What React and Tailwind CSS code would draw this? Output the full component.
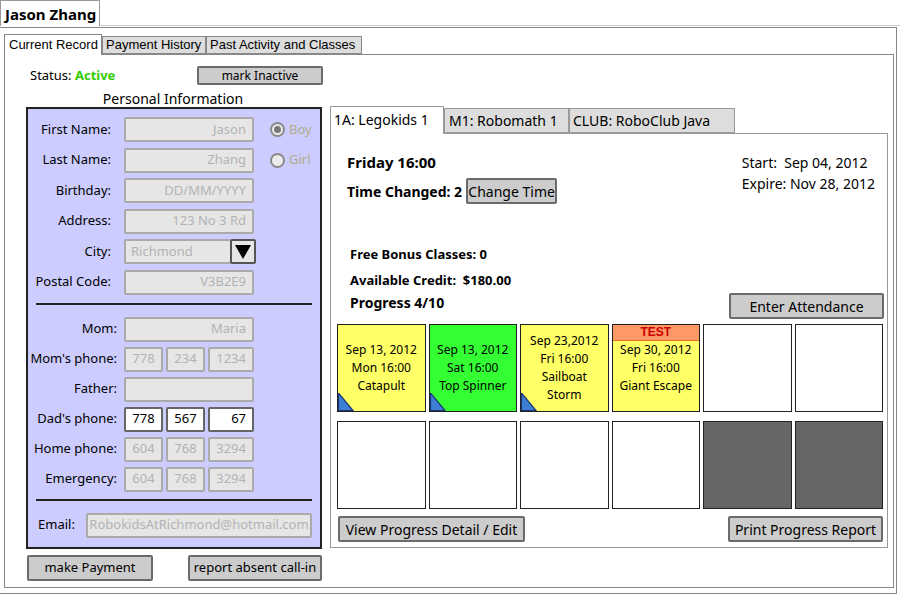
import React from 'react'

const Btn = ({ className = '', children }) => (
    <div className={`flex items-center justify-center bg-[#cccccc] border-2 border-[#6b6b6b] rounded-[2px] text-black whitespace-nowrap ${className}`}>
        {children}
    </div>
)

const Input = ({ className = '', value, white }) => (
    <div
        className={`h-[25px] flex items-center justify-end pr-[6px] text-[13px] rounded-[2px] border-2 ${white ? 'bg-white border-[#666] text-black' : 'bg-[#e6e6e6] border-[#aaa] text-[#b3b3b3]'} ${className}`}
    >
        {value}
    </div>
)

const Row = ({ label, lw, gap, children }) => (
    <div className="flex items-center h-[25px]">
        <div className={`${lw} ${gap} text-right text-[13px] whitespace-nowrap shrink-0`}>{label}</div>
        {children}
    </div>
)

const Radio = ({ checked, label }) => (
    <div className="flex items-center ml-[16px] gap-[4px]">
        <div className="w-[15px] h-[15px] rounded-full border-2 border-[#8a8a8a] bg-[#ececec] flex items-center justify-center">
            {checked && <div className="w-[7px] h-[7px] rounded-full bg-[#777]" />}
        </div>
        <span className="text-[13px] text-[#b0ad8a]">{label}</span>
    </div>
)

const Phone = ({ a, b, c, white }) => (
    <div className="flex gap-[3px]">
        <Input className="w-[39px] !justify-center !pr-0" value={a} white={white} />
        <Input className="w-[39px] !justify-center !pr-0" value={b} white={white} />
        <Input className="w-[46px]" value={c} white={white} />
    </div>
)

const Corner = () => (
    <svg className="absolute left-0 bottom-0" width="16" height="18" viewBox="0 0 16 18">
        <polygon points="0.5,0 0.5,17.5 15,17.5" fill="#3d7fd3" stroke="#1d3577" strokeWidth="1.2" />
    </svg>
)

const row1 = [
    { bg: 'bg-[#ffff66]', lines: ['Sep 13, 2012', 'Mon 16:00', 'Catapult'], corner: true },
    { bg: 'bg-[#33ff33]', lines: ['Sep 13, 2012', 'Sat 16:00', 'Top Spinner'], corner: true },
    { bg: 'bg-[#ffff66]', lines: ['Sep 23,2012', 'Fri 16:00', 'Sailboat', 'Storm'], corner: true },
    { bg: 'bg-[#ffff66]', lines: ['Sep 30, 2012', 'Fri 16:00', 'Giant Escape'], test: true },
    { bg: 'bg-white', lines: [] },
    { bg: 'bg-white', lines: [] },
]

const row2 = [
    { bg: 'bg-white', lines: [] },
    { bg: 'bg-white', lines: [] },
    { bg: 'bg-white', lines: [] },
    { bg: 'bg-white', lines: [] },
    { bg: 'bg-[#666666]', lines: [] },
    { bg: 'bg-[#666666]', lines: [] },
]

const Card = ({ card }) => (
    <div className={`relative h-[88px] border border-[#222] ${card.bg} flex flex-col items-center justify-center text-center text-[12px] leading-[18px]`}>
        {card.test && (
            <div className="absolute top-0 inset-x-0 h-[16px] bg-[#ff9966] border-b border-[#e0702a] text-[#cc0000] font-bold text-[12px] leading-[15px] font-['Liberation_Sans',sans-serif]">
                TEST
            </div>
        )}
        {card.lines.map((l) => (
            <div key={l}>{l}</div>
        ))}
        {card.corner && <Corner />}
    </div>
)

export default function App() {
    return (
        <div className="w-[900px] h-[596px] overflow-hidden bg-white text-black font-['Noto_Sans',sans-serif]">
            {/* top tab */}
            <div className="flex h-[26px]">
                <div className="w-[100px] h-[26px] border-t border-l border-r border-[#999] pl-[4px] text-[15px] font-bold leading-[26px]">
                    Jason Zhang
                </div>
                <div className="flex-1 border-b border-[#ccc]" />
            </div>

            {/* outer box */}
            <div className="mt-px w-[897px] h-[567px] border-t border-r border-b border-[#888] pl-[4px] pt-[6px]">
                <div className="flex items-end h-[20px] font-['Liberation_Sans',sans-serif] text-[13px]">
                    <div className="relative z-10 w-[98px] h-[21px] -mb-px bg-white border-t border-l border-r border-[#888] pl-[4px] leading-[19px]">
                        Current Record
                    </div>
                    <div className="w-[104px] h-[18px] bg-[#dddddd] border border-[#888] pl-[3px] leading-[16px]">
                        Payment History
                    </div>
                    <div className="w-[156px] h-[18px] bg-[#dddddd] border border-[#888] pl-[3px] leading-[16px]">
                        Past Activity and Classes
                    </div>
                </div>

                <div className="w-[890px] h-[534px] border border-[#888] flex pl-[21px]">
                    {/* left column */}
                    <div className="w-[296px] flex flex-col">
                        <div className="mt-[11px] h-[19px] flex items-center">
                            <div className="pl-[4px] text-[13px]">
                                Status: <span className="font-bold text-[#33cc00]">Active</span>
                            </div>
                            <Btn className="ml-auto -mr-px w-[126px] h-[19px] text-[12px]">mark Inactive</Btn>
                        </div>
                        <div className="h-[22px] pt-[5px] text-center text-[14px] leading-[17px] pr-[2px]">Personal Information</div>

                        <div className="h-[442px] bg-[#ccccff] border-2 border-[#222] pt-[8px]">
                            <div className="flex flex-col gap-[5.5px]">
                                <Row label="First Name:" lw="w-[83px]" gap="mr-[13px]">
                                    <Input className="w-[130px]" value="Jason" />
                                    <Radio checked label="Boy" />
                                </Row>
                                <Row label="Last Name:" lw="w-[83px]" gap="mr-[13px]">
                                    <Input className="w-[130px]" value="Zhang" />
                                    <Radio label="Girl" />
                                </Row>
                                <Row label="Birthday:" lw="w-[83px]" gap="mr-[13px]">
                                    <Input className="w-[130px]" value="DD/MM/YYYY" />
                                </Row>
                                <Row label="Address:" lw="w-[83px]" gap="mr-[13px]">
                                    <Input className="w-[130px]" value="123 No 3 Rd" />
                                </Row>
                                <Row label="City:" lw="w-[83px]" gap="mr-[13px]">
                                    <div className="w-[132px] h-[25px] flex">
                                        <div className="flex-1 bg-[#e6e6e6] border-2 border-r-0 border-[#aaa] rounded-l-[2px] text-[13px] text-[#b3b3b3] pl-[5px] leading-[21px]">
                                            Richmond
                                        </div>
                                        <div className="w-[26px] bg-[#e6e6e6] border-2 border-[#555] rounded-[2px] flex items-center justify-center">
                                            <svg width="16" height="14" viewBox="0 0 16 14">
                                                <polygon points="0,0 16,0 8,14" fill="#000" />
                                            </svg>
                                        </div>
                                    </div>
                                </Row>
                                <Row label="Postal Code:" lw="w-[83px]" gap="mr-[13px]">
                                    <Input className="w-[130px]" value="V3B2E9" />
                                </Row>
                            </div>

                            <div className="mx-[8px] mt-[8px] mb-[12px] h-[2px] bg-[#222]" />

                            <div className="flex flex-col gap-[5px]">
                                <Row label="Mom:" lw="w-[89px]" gap="mr-[7px]">
                                    <Input className="w-[130px]" value="Maria" />
                                </Row>
                                <Row label="Mom's phone:" lw="w-[89px]" gap="mr-[7px]">
                                    <Phone a="778" b="234" c="1234" />
                                </Row>
                                <Row label="Father:" lw="w-[89px]" gap="mr-[7px]">
                                    <Input className="w-[130px]" value="" />
                                </Row>
                                <Row label="Dad's phone:" lw="w-[89px]" gap="mr-[7px]">
                                    <Phone a="778" b="567" c="67" white />
                                </Row>
                                <Row label="Home phone:" lw="w-[89px]" gap="mr-[7px]">
                                    <Phone a="604" b="768" c="3294" />
                                </Row>
                                <Row label="Emergency:" lw="w-[89px]" gap="mr-[7px]">
                                    <Phone a="604" b="768" c="3294" />
                                </Row>
                            </div>

                            <div className="mx-[8px] mt-[7px] mb-[12px] h-[2px] bg-[#222]" />

                            <div className="flex items-center h-[25px] pl-[10px]">
                                <div className="w-[48px] text-[13px]">Email:</div>
                                <Input className="w-[226px] !justify-center !pr-0" value="RobokidsAtRichmond@hotmail.com" />
                            </div>
                        </div>

                        <div className="mt-[6px] flex justify-between">
                            <Btn className="ml-px w-[126px] h-[26px] text-[13px]">make Payment</Btn>
                            <Btn className="w-[134px] h-[26px] text-[13px]">report absent call-in</Btn>
                        </div>
                    </div>

                    {/* right column */}
                    <div className="ml-[8px] w-[558px] mt-[51px] flex flex-col">
                        <div className="flex items-end h-[27px] text-[14px]">
                            <div className="relative z-10 w-[114px] h-[28px] -mb-px bg-white border-t border-l border-r border-[#999] pl-[3px] leading-[26px]">
                                1A: Legokids 1
                            </div>
                            <div className="w-[125px] h-[25px] bg-[#dddddd] border border-[#999] pl-[4px] leading-[23px]">
                                M1: Robomath 1
                            </div>
                            <div className="w-[166px] h-[25px] bg-[#dddddd] border border-[#999] pl-[3px] leading-[23px]">
                                CLUB: RoboClub Java
                            </div>
                        </div>

                        <div className="h-[415px] border border-[#999] pl-[6px] pr-[4px] flex flex-col">
                            <div className="flex justify-between pt-[18px]">
                                <div className="pl-[10px]">
                                    <div className="text-[15px] font-bold leading-[21px]">Friday 16:00</div>
                                    <div className="mt-[5px] flex items-center gap-[4px]">
                                        <span className="text-[14px] font-bold">Time Changed: 2</span>
                                        <Btn className="w-[91px] h-[26px] text-[14px]">Change Time</Btn>
                                    </div>
                                </div>
                                <div className="pr-[8px] text-[14px] leading-[21px]">
                                    <div>Start:&nbsp; Sep 04, 2012</div>
                                    <div>Expire: Nov 28, 2012</div>
                                </div>
                            </div>

                            <div className="mt-[37px] pl-[13px] text-[13px] font-bold leading-[26px]">
                                <div>Free Bonus Classes: 0</div>
                                <div>Available Credit:&nbsp; $180.00</div>
                            </div>
                            <div className="flex items-start h-[26px]">
                                <div className="pl-[13px] text-[14px] font-bold leading-[20px]">Progress 4/10</div>
                                <Btn className="ml-auto -mr-[1px] w-[155px] h-[26px] text-[14px]">Enter Attendance</Btn>
                            </div>

                            <div className="mt-[5px] grid grid-cols-6 gap-x-[3px] gap-y-[9px] w-[546px]">
                                {row1.map((c, i) => (
                                    <Card key={'a' + i} card={c} />
                                ))}
                                {row2.map((c, i) => (
                                    <Card key={'b' + i} card={c} />
                                ))}
                            </div>

                            <div className="mt-[7px] flex justify-between w-[546px]">
                                <Btn className="ml-px w-[187px] h-[26px] text-[14px]">View Progress Detail / Edit</Btn>
                                <Btn className="w-[155px] h-[26px] text-[14px]">Print Progress Report</Btn>
                            </div>
                        </div>
                    </div>
                </div>
            </div>
        </div>
    )
}
